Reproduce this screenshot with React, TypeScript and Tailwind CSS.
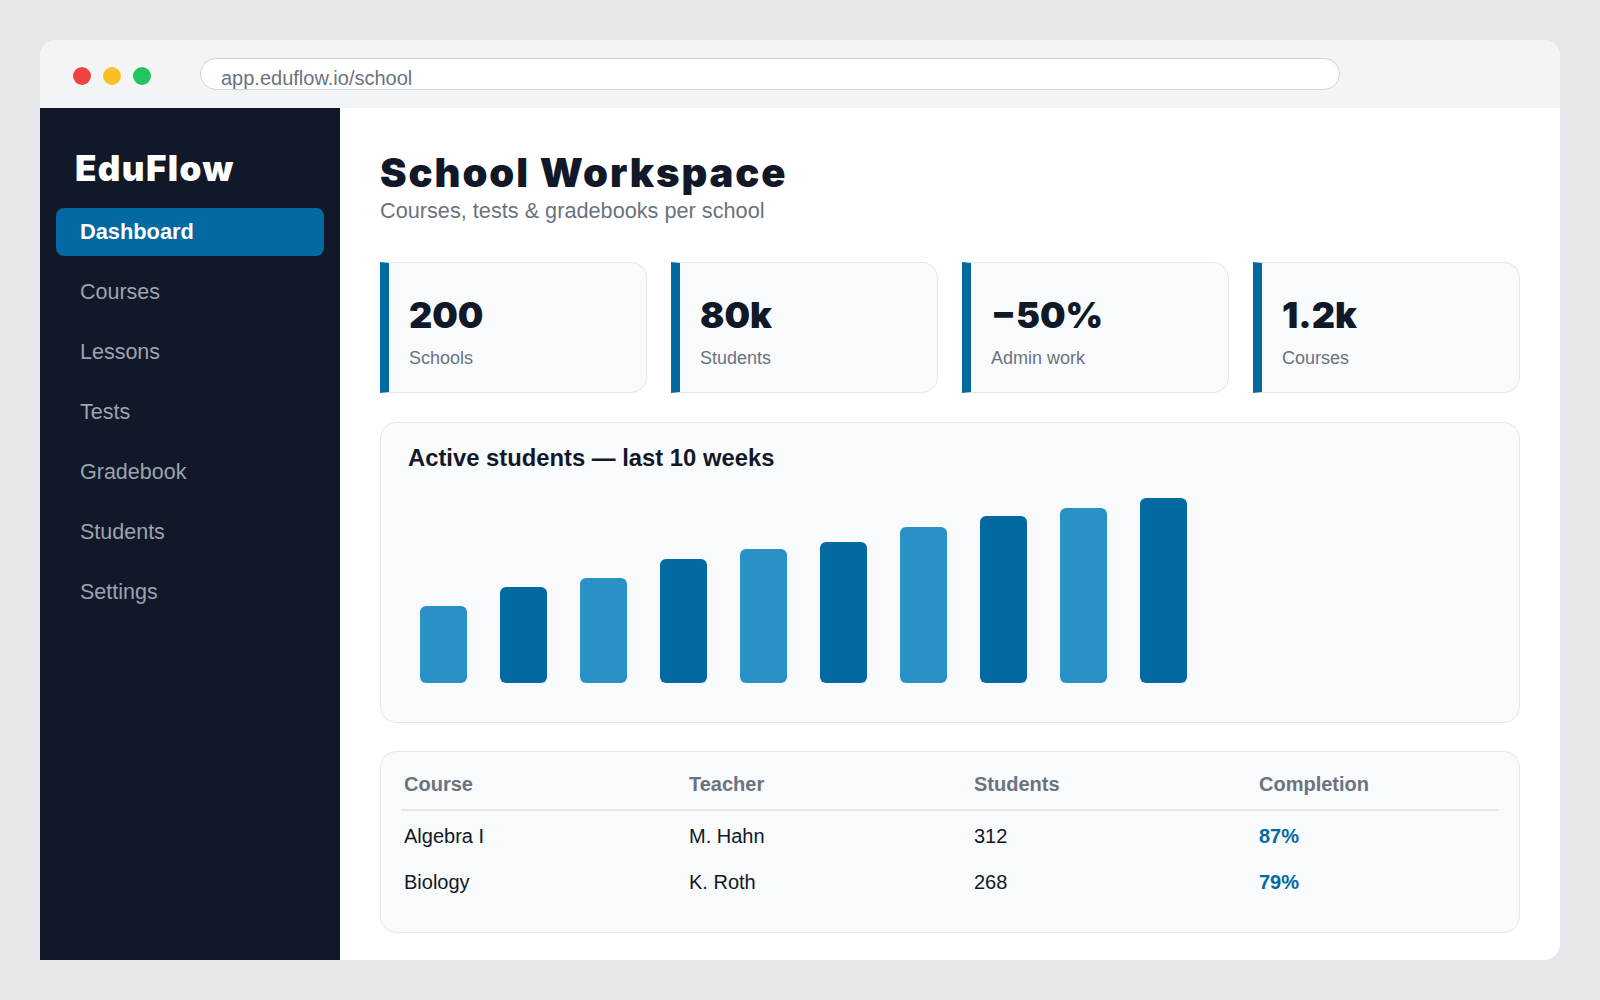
import React from 'react';

const navItems = ['Dashboard', 'Courses', 'Lessons', 'Tests', 'Gradebook', 'Students', 'Settings'];

const stats = [
  { value: '200', label: 'Schools' },
  { value: '80k', label: 'Students' },
  { value: '\u221250%', label: 'Admin work' },
  { value: '1.2k', label: 'Courses' },
];

// bar heights in px, oldest week first
const weeks = [77, 96, 105, 124, 134, 141, 156, 167, 175, 185];

const courses = [
  { course: 'Algebra I', teacher: 'M. Hahn', students: 312, completion: '87%' },
  { course: 'Biology', teacher: 'K. Roth', students: 268, completion: '79%' },
];

const heavy = "font-['Arial_Black',Inter,'Liberation_Sans',sans-serif] font-black";

export default function App() {
  return (
    <div className="min-h-screen bg-[#e5e7eb] p-10 font-['Liberation_Sans',Arial,sans-serif]">
      <div className="flex h-[920px] flex-col rounded-2xl bg-white">
        {/* window chrome */}
        <div className="flex h-[68px] shrink-0 items-center rounded-t-2xl bg-[#f3f4f6] pl-[33px]">
          <div className="flex gap-3 pt-[3px]">
            <span className="h-[18px] w-[18px] rounded-full bg-[#ef4444]" />
            <span className="h-[18px] w-[18px] rounded-full bg-[#fbbf24]" />
            <span className="h-[18px] w-[18px] rounded-full bg-[#22c55e]" />
          </div>
          <div className="ml-[49px] flex h-8 w-[1140px] items-center rounded-full border border-[#d1d5db] bg-white px-5 pt-[7px] text-[20px] leading-[20px] text-[#6b7280]">
            app.eduflow.io/school
          </div>
        </div>

        <div className="flex flex-1">
          {/* sidebar */}
          <aside className="w-[300px] shrink-0 bg-[#111827] px-4 pt-[39px]">
            <div className={`${heavy} mb-[19px] pl-[19px] text-[35px] leading-[42px] tracking-[1.4px] text-white`}>EduFlow</div>
            <nav className="flex flex-col gap-3">
              {navItems.map((item, i) => (
                <div
                  key={item}
                  className={
                    i === 0
                      ? 'flex h-12 items-center rounded-lg bg-[#0369a1] px-6 text-[21.8px] font-bold text-white'
                      : 'flex h-12 items-center rounded-lg px-6 text-[21.5px] text-[#9ca3af]'
                  }
                >
                  {item}
                </div>
              ))}
            </nav>
          </aside>

          {/* main */}
          <main className="flex-1 px-10 pt-10">
            <h1 className={`${heavy} pt-px text-[40px] leading-[48px] tracking-[1.9px] text-[#111827]`}>School Workspace</h1>
            <p className="-mt-px text-[21.7px] leading-[29px] text-[#6b7280]">Courses, tests &amp; gradebooks per school</p>

            <div className="mt-[37px] grid grid-cols-4 gap-6">
              {stats.map((s) => (
                <div
                  key={s.label}
                  className="rounded-r-2xl border border-l-[9px] border-[#e5e7eb] border-l-[#0369a1] bg-[#f8fafc] pb-[20px] pl-5 pt-[30px]"
                >
                  <div className={`${heavy} text-[36px] leading-[44px] text-[#111827]`}>{s.value}</div>
                  <div className="mt-[8px] text-[18px] leading-[27px] text-[#6b7280]">{s.label}</div>
                </div>
              ))}
            </div>

            <div className="mt-[29px] rounded-2xl border border-[#e5e7eb] bg-[#f8fafc] px-[27px] pb-[39px] pt-5">
              <h2 className="text-[23.8px] font-bold leading-[30px] text-[#111827]">Active students — last 10 weeks</h2>
              <div className="mt-[25px] flex h-[185px] items-end gap-[33px] pl-3">
                {weeks.map((h, i) => (
                  <div
                    key={i}
                    className={i % 2 === 0 ? 'w-[47px] rounded-md bg-[#2a91c7]' : 'w-[47px] rounded-md bg-[#0369a1]'}
                    style={{ height: h }}
                  />
                ))}
              </div>
            </div>

            <div className="mt-[28px] rounded-2xl border border-[#e5e7eb] bg-[#f8fafc] px-5 pb-[29px] pt-[17px]">
              <div className="grid grid-cols-[285px_285px_285px_1fr] border-b-2 border-[#e5e7eb] pb-[10px] text-[20px] font-bold leading-[30px] text-[#6b7280]">
                <div className="pl-[3px]">Course</div>
                <div className="pl-[3px]">Teacher</div>
                <div className="pl-[3px]">Students</div>
                <div className="pl-[3px]">Completion</div>
              </div>
              {courses.map((c) => (
                <div
                  key={c.course}
                  className="grid grid-cols-[285px_285px_285px_1fr] pb-[6px] pt-[10px] text-[20px] leading-[30px] text-[#111827]"
                >
                  <div className="pl-[3px]">{c.course}</div>
                  <div className="pl-[3px]">{c.teacher}</div>
                  <div className="pl-[3px]">{c.students}</div>
                  <div className="pl-[3px] font-bold text-[#0369a1]">{c.completion}</div>
                </div>
              ))}
            </div>
          </main>
        </div>
      </div>
    </div>
  );
}
